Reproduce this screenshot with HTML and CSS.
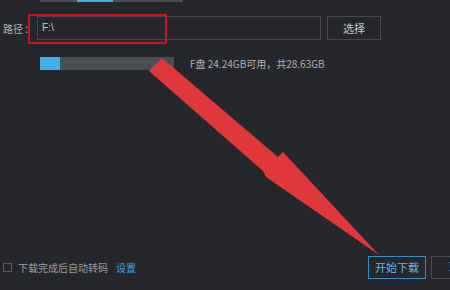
FILE: index.html
```
<!DOCTYPE html>
<html lang="zh">
<head>
<meta charset="utf-8">
<link rel="stylesheet" href="styles.css">
</head>
<body>
<div class="page">
  <div class="topbar"><div class="topbar-fill"></div></div>
  <div class="path-row">
    <span class="label">路径<span class="colon">：</span></span>
    <div class="input">F:\</div>
    <div class="btn">选择</div>
  </div>
  <div class="disk-row">
    <div class="disk-bar"><div class="disk-used"></div></div>
    <span class="disk-text">F盘 24.24GB可用，共28.63GB</span>
  </div>
  <div class="bottom-row">
    <div class="left-group">
      <span class="checkbox"></span>
      <span class="check-label">下载完成后自动转码</span>
      <span class="link">设置</span>
    </div>
    <div class="btn btn-primary">开始下载</div>
    <div class="btn btn-cancel">取消</div>
  </div>
  <div class="highlight"></div>
  <svg class="arrow" width="450" height="290" viewBox="0 0 450 290">
    <polygon points="162,58 278,157 283,152 379,255 266,177 263,171 149,71" fill="#e0383a"/>
  </svg>
</div>
</body>
</html>
```
FILE: styles.css
```
html, body {
  margin: 0;
  padding: 0;
  background: #25272c;
  overflow: hidden;
}
.page {
  position: relative;
  width: 450px;
  height: 290px;
  display: flex;
  flex-direction: column;
  font-family: "Noto Sans CJK SC", "Noto Sans", sans-serif;
  color: #b5b6ba;
  overflow: hidden;
}
.topbar {
  margin-left: 40px;
  width: 143px;
  height: 2px;
  background: #4a4d54;
  display: flex;
}
.topbar-fill {
  margin-left: 37px;
  width: 36px;
  background: #3fb0e8;
}
.path-row {
  margin-top: 14px;
  display: flex;
  align-items: center;
  height: 24px;
}
.label {
  flex: none;
  width: 37px;
  padding-left: 3px;
  box-sizing: border-box;
  font-size: 10px;
  white-space: nowrap;
  overflow: visible;
  color: #b0b1b5;
  position: relative;
  z-index: 2;
}
.colon {
  margin-left: 1px;
}
.input {
  width: 284px;
  height: 24px;
  box-sizing: border-box;
  border: 1px solid #46484e;
  font-size: 10px;
  line-height: 22px;
  padding-left: 4px;
  color: #c8c9cc;
  font-family: "Liberation Sans", sans-serif;
}
.btn {
  flex: none;
  height: 24px;
  box-sizing: border-box;
  border: 1px solid #46484e;
  font-size: 11px;
  line-height: 22px;
  text-align: center;
  color: #c4c5c8;
}
.path-row .btn {
  width: 54px;
  margin-left: 6px;
}
.disk-row {
  margin-top: 17px;
  display: flex;
  align-items: center;
  height: 13px;
}
.disk-bar {
  margin-left: 40px;
  width: 134px;
  height: 13px;
  background: #4a4d54;
}
.disk-used {
  width: 20px;
  height: 13px;
  background: #3fb0e8;
}
.disk-text {
  margin-left: 16px;
  font-size: 10px;
  white-space: nowrap;
  color: #b0b1b6;
}
.bottom-row {
  margin-top: auto;
  margin-bottom: 11px;
  display: flex;
  align-items: center;
  height: 23px;
}
.left-group {
  flex: none;
  width: 368px;
  display: flex;
  align-items: center;
}
.checkbox {
  margin-left: 3px;
  width: 9px;
  height: 9px;
  box-sizing: border-box;
  border: 1px solid #5c5e64;
}
.check-label {
  margin-left: 6px;
  font-size: 10px;
  color: #9c9ea3;
  white-space: nowrap;
}
.link {
  margin-left: 8px;
  font-size: 10px;
  color: #3fa7e0;
}
.bottom-row .btn {
  width: 58px;
  height: 23px;
  line-height: 21px;
}
.btn-primary {
  border-color: #3b8dbd;
  color: #5ab5e8;
}
.btn-cancel {
  margin-left: 5px;
  border-color: #4a4c52;
}
.highlight {
  position: absolute;
  left: 28px;
  top: 14px;
  width: 139px;
  height: 30px;
  box-sizing: border-box;
  border: 2px solid #c8161d;
}
.arrow {
  position: absolute;
  left: 0;
  top: 0;
}
```
